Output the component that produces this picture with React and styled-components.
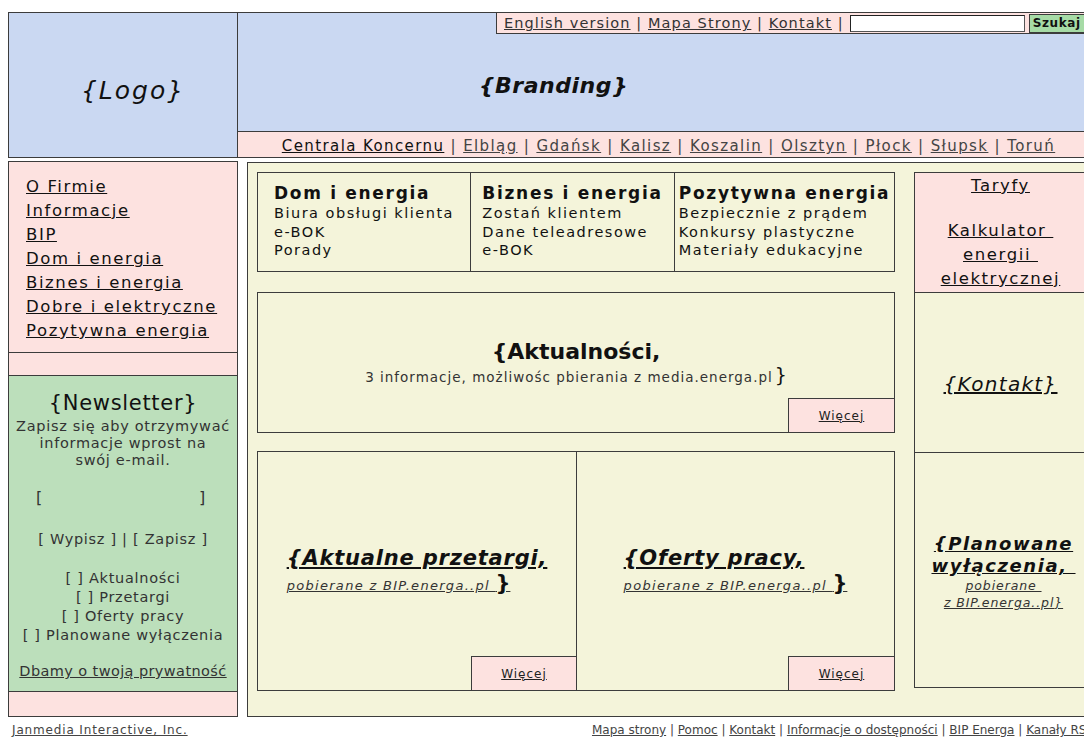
import styled, { createGlobalStyle } from "styled-components";

const GlobalStyle = createGlobalStyle`
  html, body {
    margin: 0;
    padding: 0;
    overflow: hidden;
    background: #ffffff;
  }
  body {
    font-family: "DejaVu Sans", Verdana, sans-serif;
    color: #111;
  }
  * {
    box-sizing: border-box;
  }
  a {
    color: inherit;
    text-decoration: underline;
    cursor: pointer;
  }
`;

const BLUE = "#cad8f2";
const PINK = "#fde2e0";
const BEIGE = "#f4f4da";
const GREEN = "#bcdfbb";
const LINE = "#3c3c3c";

const Page = styled.div`
  width: 1100px;
  padding: 12px 0 0 8px;
`;

const Header = styled.header`
  display: grid;
  grid-template-columns: 229px 1fr;
  height: 146px;
  border: 1px solid ${LINE};
  background: ${BLUE};
`;

const LogoCell = styled.div`
  border-right: 1px solid ${LINE};
  display: flex;
  align-items: center;
  justify-content: center;
  padding: 10px 0 0 20px;
  font-size: 25px;
  letter-spacing: 2px;
  font-style: italic;
`;

const BrandCell = styled.div`
  display: flex;
  flex-direction: column;
`;

const TopBar = styled.div`
  margin-left: 258px;
  display: flex;
  align-items: center;
  height: 21px;
  padding-left: 7px;
  background: ${PINK};
  border-left: 1px solid ${LINE};
  border-bottom: 1px solid ${LINE};
  font-size: 14.5px;
  letter-spacing: 1.1px;
  color: #333;
  white-space: nowrap;
`;

const Sep = styled.span`
  color: #333;
  text-decoration: none;
  white-space: pre;
`;

const SearchInput = styled.div`
  flex: none;
  width: 175px;
  height: 17px;
  margin-left: 6px;
  background: #fff;
  border: 1px solid #555;
  border-top-color: #222;
  border-left-color: #222;
`;

const SearchButton = styled.div`
  flex: none;
  height: 19px;
  margin-left: 4px;
  padding: 0 3px;
  display: flex;
  align-items: center;
  background: #a6dba6;
  border: 1px solid ${LINE};
  font-size: 12px;
  letter-spacing: 0.6px;
  font-weight: bold;
  color: #111;
`;

const BrandArea = styled.div`
  flex: 1;
  display: flex;
  align-items: center;
  justify-content: center;
  padding: 6px 230px 0 0;
  font-size: 22px;
  letter-spacing: 0.5px;
  font-weight: bold;
  font-style: italic;
`;

const CityNav = styled.nav`
  height: 26px;
  border-top: 1px solid ${LINE};
  background: ${PINK};
  text-align: center;
  padding-top: 2px;
  font-size: 15px;
  line-height: 25px;
  letter-spacing: 1.4px;
  color: #444;
  white-space: nowrap;
`;

const CityLink = styled.a`
  color: ${(p) => (p.$main ? "#111" : "#444")};
`;

const Body = styled.div`
  display: grid;
  grid-template-columns: 230px 1fr;
  column-gap: 9px;
  margin-top: 3px;
  align-items: start;
`;

const LeftCol = styled.aside`
  border: 1px solid ${LINE};
  display: flex;
  flex-direction: column;
`;

const LeftSection = styled.div`
  height: ${(p) => p.$h}px;
  background: ${(p) => p.$bg};
  border-top: ${(p) => (p.$first ? "none" : `1px solid ${LINE}`)};
`;

const NavList = styled.ul`
  list-style: none;
  margin: 0;
  padding: 13px 0 0 17px;
  font-size: 16.5px;
  letter-spacing: 1.6px;
  line-height: 24px;
  white-space: nowrap;
`;

const Newsletter = styled.div`
  height: 100%;
  display: flex;
  flex-direction: column;
  align-items: center;
  text-align: center;
  padding-top: 14px;
  color: #333;
  font-size: 14.5px;
  letter-spacing: 0.7px;
  line-height: 17px;
  white-space: nowrap;
`;

const NewsTitle = styled.div`
  font-size: 21px;
  letter-spacing: 0.7px;
  line-height: 26px;
  color: #111;
  margin-bottom: 2px;
`;

const EmailField = styled.div`
  width: 170px;
  display: flex;
  justify-content: space-between;
  margin: 20px 0 0 -4px;
  font-size: 16px;
`;

const Buttons = styled.div`
  margin-top: 25px;
`;

const Checks = styled.div`
  margin-top: 21px;
  line-height: 19px;
`;

const Privacy = styled.a`
  margin-top: 18px;
  letter-spacing: 0.4px;
  color: #333;
`;

const Main = styled.main`
  margin-top: 1px;
  height: 555px;
  border: 1px solid ${LINE};
  background: ${BEIGE};
  padding: 9px 0 0 9px;
  display: grid;
  grid-template-columns: 638px 173px;
  column-gap: 19px;
  align-items: start;
`;

const Center = styled.div`
  display: flex;
  flex-direction: column;
`;

const Tabs = styled.div`
  height: 100px;
  display: grid;
  grid-template-columns: 212px 204px 1fr;
  border: 1px solid ${LINE};
`;

const Tab = styled.div`
  display: flex;
  justify-content: center;
  padding-top: 9px;
  border-left: ${(p) => (p.$first ? "none" : `1px solid ${LINE}`)};
`;

const TabInner = styled.div`
  font-size: 14.5px;
  letter-spacing: 1.5px;
  line-height: 18.5px;
  white-space: nowrap;
`;

const TabTitle = styled.div`
  font-size: 17px;
  letter-spacing: 1.7px;
  font-weight: bold;
  line-height: 22px;
`;

const Box = styled.section`
  height: ${(p) => p.$h}px;
  margin-top: ${(p) => p.$mt || 0}px;
  border: 1px solid ${LINE};
  display: flex;
  flex-direction: column;
`;

const Split = styled.div`
  height: 240px;
  margin-top: 18px;
  display: grid;
  grid-template-columns: 318px 1fr;
  border: 1px solid ${LINE};
`;

const SplitCell = styled.section`
  display: flex;
  flex-direction: column;
  border-left: ${(p) => (p.$first ? "none" : `1px solid ${LINE}`)};
`;

const BoxContent = styled.div`
  flex: 1;
  display: flex;
  flex-direction: column;
  align-items: center;
  justify-content: center;
  padding-top: 34px;
  text-align: center;
`;

const Headline = styled.div`
  font-size: 22px;
  font-weight: bold;
  line-height: 26px;
`;

const Subline = styled.div`
  font-size: 13.5px;
  letter-spacing: 1px;
  color: #333;
  line-height: 20px;
  white-space: nowrap;
`;

const BigBrace = styled.span`
  font-size: 19px;
  letter-spacing: 0;
  color: #111;
  margin-left: 2px;
`;

const BoxFooter = styled.div`
  display: flex;
  justify-content: flex-end;
`;

const MoreButton = styled.a`
  width: ${(p) => p.$w || 106}px;
  height: 34px;
  background: ${PINK};
  border-left: 1px solid ${LINE};
  border-top: 1px solid ${LINE};
  display: flex;
  align-items: center;
  justify-content: center;
  font-size: 12px;
  letter-spacing: 1px;
  color: #222;
`;

const Feed = styled.div`
  display: flex;
  flex-direction: column;
  align-items: flex-start;
  text-align: left;
  white-space: nowrap;
`;

const FeedTitle = styled.a`
  font-size: 21px;
  letter-spacing: 0.8px;
  font-weight: bold;
  font-style: italic;
  line-height: 26px;
`;

const FeedSource = styled.a`
  font-size: 13px;
  letter-spacing: 1.3px;
  font-style: italic;
  color: #333;
  line-height: 24px;
`;

const FeedBrace = styled.span`
  font-size: 21px;
  font-weight: bold;
  font-style: normal;
  letter-spacing: 0;
  color: #111;
`;

const RightCol = styled.aside`
  height: 516px;
  border: 1px solid ${LINE};
  display: flex;
  flex-direction: column;
`;

const RightSection = styled.div`
  height: ${(p) => p.$h}px;
  background: ${(p) => p.$bg || "transparent"};
  border-top: ${(p) => (p.$first ? "none" : `1px solid ${LINE}`)};
  display: flex;
  flex-direction: column;
  align-items: center;
  justify-content: ${(p) => p.$justify || "center"};
  text-align: center;
  white-space: nowrap;
`;

const RightLinks = styled.div`
  font-size: 16.5px;
  letter-spacing: 1.6px;
  line-height: 24px;
  padding-top: 1px;
`;

const Calculator = styled.a`
  display: block;
  margin-top: 21px;
`;

const ContactLink = styled.a`
  font-size: 20px;
  letter-spacing: 1.3px;
  font-style: italic;
  padding-top: 22px;
`;

const Planned = styled.div`
  padding: 4px 0 0 6px;
  line-height: 22px;
`;

const PlannedTitle = styled.a`
  display: block;
  font-size: 18px;
  letter-spacing: 1.6px;
  font-weight: bold;
  font-style: italic;
`;

const PlannedSource = styled.a`
  display: block;
  font-size: 12.5px;
  letter-spacing: 0.9px;
  font-style: italic;
  color: #333;
  line-height: 17px;
`;

const Footer = styled.footer`
  display: flex;
  justify-content: space-between;
  padding: 6px 6px 0 4px;
  font-size: 12px;
  color: #444;
  white-space: nowrap;
`;

const FooterCredit = styled.a`
  letter-spacing: 0.85px;
`;

const cities = ["Elbląg", "Gdańsk", "Kalisz", "Koszalin", "Olsztyn", "Płock", "Słupsk", "Toruń"];

const leftNav = [
  "O Firmie",
  "Informacje",
  "BIP",
  "Dom i energia",
  "Biznes i energia",
  "Dobre i elektryczne",
  "Pozytywna energia",
];

const tabs = [
  { title: "Dom i energia", items: ["Biura obsługi klienta", "e-BOK", "Porady"] },
  { title: "Biznes i energia", items: ["Zostań klientem", "Dane teleadresowe", "e-BOK"] },
  { title: "Pozytywna energia", items: ["Bezpiecznie z prądem", "Konkursy plastyczne", "Materiały edukacyjne"] },
];

const footerLinks = ["Mapa strony", "Pomoc", "Kontakt", "Informacje o dostępności", "BIP Energa", "Kanały RSS"];

export default function App() {
  return (
    <>
      <GlobalStyle />
      <Page>
        <Header>
          <LogoCell>{"{Logo}"}</LogoCell>
          <BrandCell>
            <TopBar>
              <a>English version</a>
              <Sep>{" | "}</Sep>
              <a>Mapa Strony</a>
              <Sep>{" | "}</Sep>
              <a>Kontakt</a>
              <Sep>{" |"}</Sep>
              <SearchInput />
              <SearchButton>Szukaj</SearchButton>
            </TopBar>
            <BrandArea>{"{Branding}"}</BrandArea>
            <CityNav>
              <CityLink $main>Centrala Koncernu</CityLink>
              {cities.map((c) => (
                <span key={c}>
                  {" | "}
                  <CityLink>{c}</CityLink>
                </span>
              ))}
            </CityNav>
          </BrandCell>
        </Header>

        <Body>
          <LeftCol>
            <LeftSection $first $h={190} $bg={PINK}>
              <NavList>
                {leftNav.map((item) => (
                  <li key={item}>
                    <a>{item}</a>
                  </li>
                ))}
              </NavList>
            </LeftSection>
            <LeftSection $h={23} $bg={PINK} />
            <LeftSection $h={316} $bg={GREEN}>
              <Newsletter>
                <NewsTitle>{"{Newsletter}"}</NewsTitle>
                <div>Zapisz się aby otrzymywać</div>
                <div>informacje wprost na</div>
                <div>swój e-mail.</div>
                <EmailField>
                  <span>[</span>
                  <span>]</span>
                </EmailField>
                <Buttons>[ Wypisz ] | [ Zapisz ]</Buttons>
                <Checks>
                  <div>[ ] Aktualności</div>
                  <div>[ ] Przetargi</div>
                  <div>[ ] Oferty pracy</div>
                  <div>[ ] Planowane wyłączenia</div>
                </Checks>
                <Privacy>Dbamy o twoją prywatność</Privacy>
              </Newsletter>
            </LeftSection>
            <LeftSection $h={25} $bg={PINK} />
          </LeftCol>

          <Main>
            <Center>
              <Tabs>
                {tabs.map((t, i) => (
                  <Tab key={t.title} $first={i === 0}>
                    <TabInner>
                      <TabTitle>{t.title}</TabTitle>
                      {t.items.map((it) => (
                        <div key={it}>{it}</div>
                      ))}
                    </TabInner>
                  </Tab>
                ))}
              </Tabs>

              <Box $h={141} $mt={20}>
                <BoxContent>
                  <Headline>{"{Aktualności,"}</Headline>
                  <Subline>
                    3 informacje, możliwośc pbierania z media.energa.pl
                    <BigBrace>{"}"}</BigBrace>
                  </Subline>
                </BoxContent>
                <BoxFooter>
                  <MoreButton>Więcej</MoreButton>
                </BoxFooter>
              </Box>

              <Split>
                <SplitCell $first>
                  <BoxContent>
                    <Feed>
                      <FeedTitle>{"{Aktualne przetargi,"}</FeedTitle>
                      <FeedSource>
                        pobierane z BIP.energa..pl <FeedBrace>{"}"}</FeedBrace>
                      </FeedSource>
                    </Feed>
                  </BoxContent>
                  <BoxFooter>
                    <MoreButton $w={105}>Więcej</MoreButton>
                  </BoxFooter>
                </SplitCell>
                <SplitCell>
                  <BoxContent>
                    <Feed>
                      <FeedTitle>{"{Oferty pracy,"}</FeedTitle>
                      <FeedSource>
                        pobierane z BIP.energa..pl <FeedBrace>{"}"}</FeedBrace>
                      </FeedSource>
                    </Feed>
                  </BoxContent>
                  <BoxFooter>
                    <MoreButton>Więcej</MoreButton>
                  </BoxFooter>
                </SplitCell>
              </Split>
            </Center>

            <RightCol>
              <RightSection $first $h={119} $bg={PINK} $justify="flex-start">
                <RightLinks>
                  <a>Taryfy</a>
                  <Calculator>
                    Kalkulator&nbsp;
                    <br />
                    energii&nbsp;
                    <br />
                    elektrycznej
                  </Calculator>
                </RightLinks>
              </RightSection>
              <RightSection $h={160}>
                <ContactLink>{"{Kontakt}"}</ContactLink>
              </RightSection>
              <RightSection $h={235}>
                <Planned>
                  <PlannedTitle>
                    {"{Planowane"}
                    <br />
                    wyłączenia,&nbsp;
                  </PlannedTitle>
                  <PlannedSource>pobierane&nbsp;</PlannedSource>
                  <PlannedSource>z BIP.energa..pl{"}"}</PlannedSource>
                </Planned>
              </RightSection>
            </RightCol>
          </Main>
        </Body>

        <Footer>
          <FooterCredit>Janmedia Interactive, Inc.</FooterCredit>
          <span>
            {footerLinks.map((l, i) => (
              <span key={l}>
                {i > 0 && (i > 3 ? "  | " : " | ")}
                <a>{l}</a>
              </span>
            ))}
          </span>
        </Footer>
      </Page>
    </>
  );
}
